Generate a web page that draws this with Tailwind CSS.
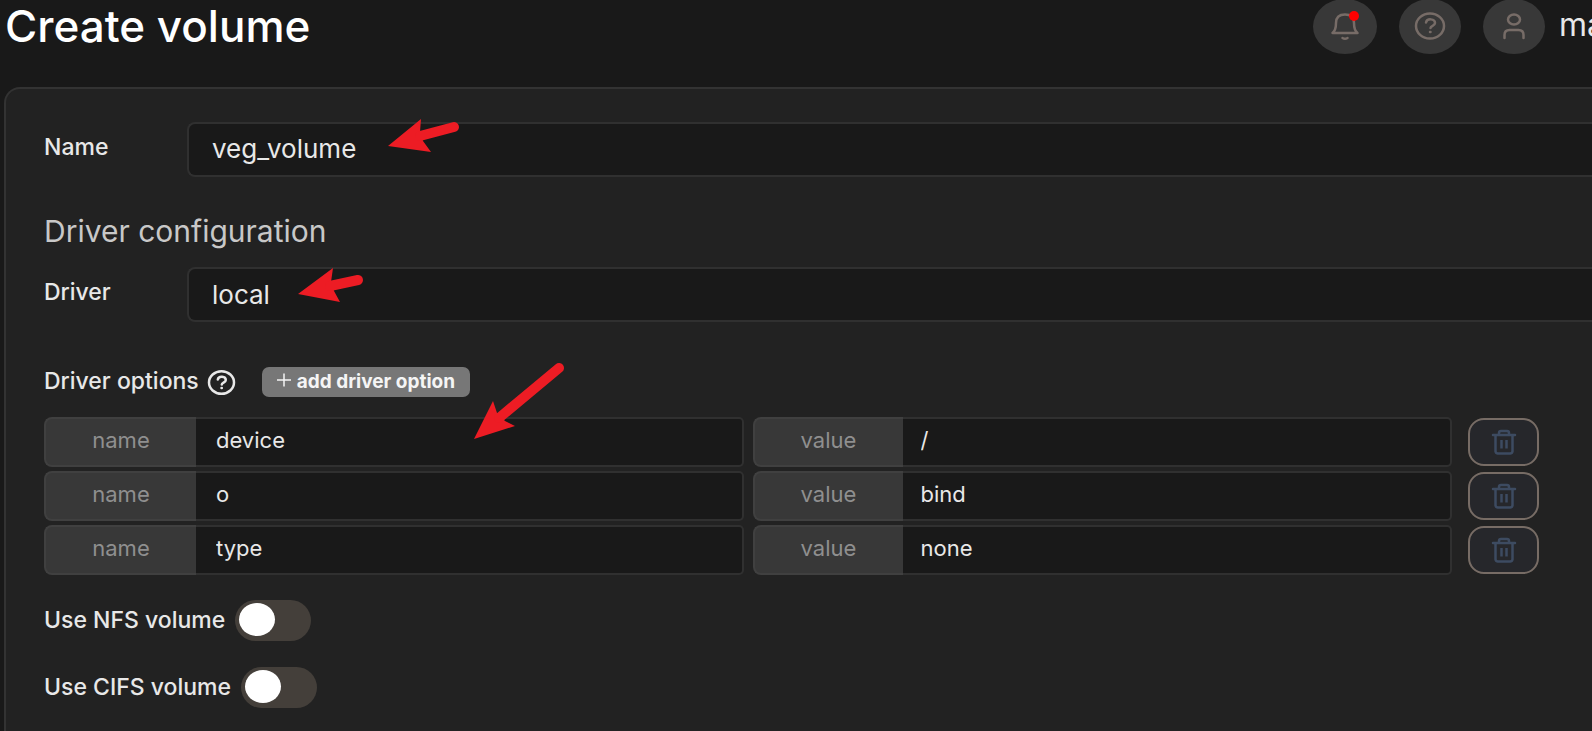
<!DOCTYPE html>
<html lang="en">
<head>
<meta charset="utf-8">
<meta name="viewport" content="width=device-width, initial-scale=1">
<title>Create volume</title>
<script src="https://cdn.jsdelivr.net/npm/@tailwindcss/browser@4"></script>
</head>
<body class="relative min-h-screen overflow-hidden bg-[#191919] font-['Inter',sans-serif] text-[#e8e8e8]">
<svg class="hidden">
  <symbol id="trash" viewBox="0 0 28 28"><g fill="none" stroke="currentColor" stroke-width="2.500" stroke-linecap="round" stroke-linejoin="round"><path d="M3 7h22M5.500 7v16.500a2.500 2.500 0 0 0 2.500 2h12a2.500 2.500 0 0 0 2.500-2V7M9 6.500V5a2 2 0 0 1 2-2h6a2 2 0 0 1 2 2v1.500"/><path d="M11.500 12v8.500M16.500 12v8.500" stroke-width="2.500" stroke-linecap="butt"/></g></symbol>
</svg>

<header class="flex h-[52px] items-center justify-between pl-[5px]">
  <h1 class="text-[44px] leading-[52px] font-medium text-white">Create volume</h1>
  <div class="flex shrink-0 items-center gap-[22px] text-[#776c67]">
    <button aria-label="Notifications" class="relative flex h-[55px] w-[64px] items-center justify-center rounded-[50%] bg-[#383838]">
      <svg width="32" height="32" viewBox="0 0 32 32" fill="none" stroke="currentColor" stroke-width="2.500" stroke-linecap="round" stroke-linejoin="round"><path d="M3.500 23h25c-2.500-2-3.500-4-3.500-10C25 7.500 22 4.500 16 4.500S7 7.500 7 13c0 6-1 8-3.500 10zM13.500 28q2.500 1.500 5 0"/></svg>
      <span class="absolute top-[12px] right-[18px] size-[10px] rounded-full bg-[#ff0000]"></span>
    </button>
    <button aria-label="Help" class="flex h-[55px] w-[62px] items-center justify-center rounded-[50%] bg-[#383838]">
      <svg width="32" height="30" viewBox="0 0 32 30" fill="none" stroke="currentColor" stroke-width="2.500" stroke-linecap="round"><ellipse cx="16" cy="15" rx="14" ry="12.500"/><path d="M12 11.500c1-4.500 9-4 9 .500 0 3-4.500 2.500-4.500 5M16 21h.500"/></svg>
    </button>
    <button aria-label="Account" class="flex h-[55px] w-[62px] items-center justify-center rounded-[50%] bg-[#383838]">
      <svg width="28" height="32" viewBox="0 0 28 32" fill="none" stroke="currentColor" stroke-width="2.500" stroke-linecap="round"><ellipse cx="14" cy="9.500" rx="6" ry="5"/><path d="M4.500 28v-3c0-3.500 2-5 5-5h9c3 0 5 1.500 5 5v3"/></svg>
    </button>
    <span class="-ml-[8px] w-[33px] overflow-hidden pb-[3px] text-[32px] leading-[48px] text-[#e8e8e8]">ma</span>
  </div>
</header>

<main class="mt-[35px] ml-[4px] min-h-[644px] rounded-tl-[16px] border-t-2 border-l-2 border-[#333333] bg-[#222222] pt-[33px] pl-[38px]">
  <form>
    <div class="flex items-center">
      <label for="name" class="w-[143px] shrink-0 pb-[4px] text-[23px] font-medium">Name</label>
      <input id="name" type="text" value="veg_volume" class="h-[55px] min-w-0 flex-1 rounded-l-[8px] border-2 border-r-0 border-[#303030] bg-[#191919] px-[23px] pb-[2px] text-[26px]">
    </div>
    <h2 class="mt-[36px] text-[30px] leading-[36px] text-[#c8c8c8]">Driver configuration</h2>
    <div class="mt-[18px] flex items-center">
      <label for="driver" class="w-[143px] shrink-0 pb-[4px] text-[23px] font-medium">Driver</label>
      <select id="driver" class="h-[55px] min-w-0 flex-1 appearance-none rounded-l-[8px] border-2 border-r-0 border-[#303030] bg-[#191919] px-[23px] text-[26px]"><option>local</option></select>
    </div>

    <div class="mt-[44px] flex h-[32px] items-center text-[23px] font-medium">
      <span class="pb-[2px]">Driver options</span>
      <svg class="ml-[8px]" width="29" height="27" viewBox="0 0 29 27" fill="none" stroke="currentColor" stroke-width="2.500" stroke-linecap="round"><ellipse cx="14.500" cy="13.500" rx="12.500" ry="11.300"/><path d="M10.800 10.500c.8-4 8-3.500 8 .500 0 2.600-4 2.600-4 4.500M14.500 19h.3"/></svg>
      <button type="button" class="ml-[26px] flex h-[30px] w-[208px] items-center gap-[6px] rounded-[7px] bg-[#777777] pl-[15px] text-[19px] font-bold text-[#f5f5f5]">
        <svg class="-mt-[4px] shrink-0" width="14" height="14" viewBox="0 0 14 14" stroke="currentColor" stroke-width="1.500"><path d="M0 7h14M7 .500v13"/></svg>
        <span class="whitespace-nowrap">add driver option</span>
      </button>
    </div>

    <div class="mt-[19px] flex flex-col gap-[4px] pr-[53px] text-[22px]">
      <div class="flex h-[50px] items-center">
        <div class="flex h-full min-w-0 flex-1"><label for="n1" class="flex w-[152px] shrink-0 items-center justify-center rounded-l-[8px] border-2 border-r-0 border-[#404040] bg-[#383838] pb-[3px] text-[#8f8f8f]">name</label><input id="n1" value="device" class="min-w-0 flex-1 rounded-r-[5px] border-2 border-l-0 border-[#303030] bg-[#191919] px-[20px] pb-[3px]"></div>
        <div class="ml-[9px] flex h-full min-w-0 flex-1"><label for="v1" class="flex w-[150px] shrink-0 items-center justify-center rounded-l-[8px] border-2 border-r-0 border-[#404040] bg-[#383838] pb-[3px] text-[#8f8f8f]">value</label><input id="v1" value="/" class="min-w-0 flex-1 rounded-r-[5px] border-2 border-l-0 border-[#303030] bg-[#191919] px-[18px] pb-[3px]"></div>
        <button type="button" aria-label="Remove device" class="ml-[16px] flex h-[48px] w-[71px] shrink-0 items-center justify-center rounded-[16px] border-2 border-[#776c65] bg-[#26272b] text-[#3d4b61]"><svg class="size-[28px]"><use href="#trash"/></svg></button>
      </div>
      <div class="flex h-[50px] items-center">
        <div class="flex h-full min-w-0 flex-1"><label for="n2" class="flex w-[152px] shrink-0 items-center justify-center rounded-l-[8px] border-2 border-r-0 border-[#404040] bg-[#383838] pb-[3px] text-[#8f8f8f]">name</label><input id="n2" value="o" class="min-w-0 flex-1 rounded-r-[5px] border-2 border-l-0 border-[#303030] bg-[#191919] px-[20px] pb-[3px]"></div>
        <div class="ml-[9px] flex h-full min-w-0 flex-1"><label for="v2" class="flex w-[150px] shrink-0 items-center justify-center rounded-l-[8px] border-2 border-r-0 border-[#404040] bg-[#383838] pb-[3px] text-[#8f8f8f]">value</label><input id="v2" value="bind" class="min-w-0 flex-1 rounded-r-[5px] border-2 border-l-0 border-[#303030] bg-[#191919] px-[18px] pb-[3px]"></div>
        <button type="button" aria-label="Remove o" class="ml-[16px] flex h-[48px] w-[71px] shrink-0 items-center justify-center rounded-[16px] border-2 border-[#776c65] bg-[#26272b] text-[#3d4b61]"><svg class="size-[28px]"><use href="#trash"/></svg></button>
      </div>
      <div class="flex h-[50px] items-center">
        <div class="flex h-full min-w-0 flex-1"><label for="n3" class="flex w-[152px] shrink-0 items-center justify-center rounded-l-[8px] border-2 border-r-0 border-[#404040] bg-[#383838] pb-[3px] text-[#8f8f8f]">name</label><input id="n3" value="type" class="min-w-0 flex-1 rounded-r-[5px] border-2 border-l-0 border-[#303030] bg-[#191919] px-[20px] pb-[3px]"></div>
        <div class="ml-[9px] flex h-full min-w-0 flex-1"><label for="v3" class="flex w-[150px] shrink-0 items-center justify-center rounded-l-[8px] border-2 border-r-0 border-[#404040] bg-[#383838] pb-[3px] text-[#8f8f8f]">value</label><input id="v3" value="none" class="min-w-0 flex-1 rounded-r-[5px] border-2 border-l-0 border-[#303030] bg-[#191919] px-[18px] pb-[3px]"></div>
        <button type="button" aria-label="Remove type" class="ml-[16px] flex h-[48px] w-[71px] shrink-0 items-center justify-center rounded-[16px] border-2 border-[#776c65] bg-[#26272b] text-[#3d4b61]"><svg class="size-[28px]"><use href="#trash"/></svg></button>
      </div>
    </div>

    <div class="mt-[25px] flex items-center gap-[10px] text-[23px] font-medium">
      <label for="nfs">Use NFS volume</label>
      <input id="nfs" type="checkbox" role="switch" class="h-[41px] w-[76px] appearance-none rounded-full bg-[#443f3a] pt-[3px] pl-[4px] before:block before:h-[33px] before:w-[36px] before:rounded-[50%] before:bg-white before:content-['']">
    </div>
    <div class="mt-[26px] flex items-center gap-[10px] text-[23px] font-medium">
      <label for="cifs">Use CIFS volume</label>
      <input id="cifs" type="checkbox" role="switch" class="h-[41px] w-[76px] appearance-none rounded-full bg-[#443f3a] pt-[3px] pl-[4px] before:block before:h-[33px] before:w-[36px] before:rounded-[50%] before:bg-white before:content-['']">
    </div>
  </form>
</main>

<!-- Annotation arrows drawn over the form -->
<svg class="pointer-events-none absolute top-0 left-0 h-[500px] w-[600px]" fill="#ed1c24" stroke="#ed1c24" aria-hidden="true">
  <g stroke="none"><path d="M388 146l33-27-1 13 3 9 8 11z"/><path d="M298 294l35-26-2 14 3 9 6 11z"/><path d="M474 439l19-38 4 12 8 8 10 5z"/></g>
  <g fill="none" stroke-width="10" stroke-linecap="round"><path d="M454 127l-34 9"/><path d="M358 280l-28 6"/><path d="M559 368l-60 50"/></g>
</svg>
</body>
</html>
